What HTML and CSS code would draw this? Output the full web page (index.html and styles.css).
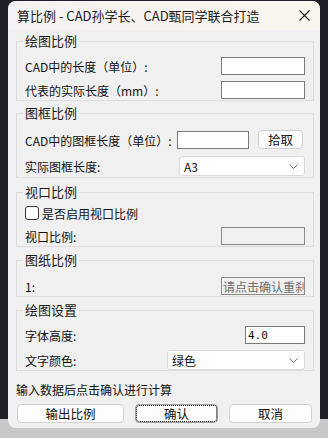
FILE: index.html
```html
<!DOCTYPE html>
<html lang="zh">
<head>
<meta charset="utf-8">
<link rel="stylesheet" href="styles.css">
</head>
<body>
<div class="window">
  <div class="titlebar">
    <span class="title">算比例 - CAD孙学长、CAD甄同学联合打造</span>
    <svg class="close" width="11" height="11" viewBox="0 0 11 11"><path d="M0.5 0.5 L10.5 10.5 M10.5 0.5 L0.5 10.5" stroke="#1a1a1a" stroke-width="1.1" fill="none"/></svg>
  </div>
  <div class="content">
    <fieldset class="group g1">
      <legend>绘图比例</legend>
      <div class="row"><span class="label">CAD中的长度（单位）:</span><span class="field w84"></span></div>
      <div class="row r-gap4"><span class="label">代表的实际长度（mm）:</span><span class="field w84"></span></div>
    </fieldset>
    <fieldset class="group g2">
      <legend>图框比例</legend>
      <div class="row"><span class="label">CAD中的图框长度（单位）:</span><span class="field w72 push"></span><span class="btn pick">拾取</span></div>
      <div class="row r-gap6"><span class="label">实际图框长度:</span><span class="select w126"><span class="sel-text">A3</span><svg class="chev" width="9" height="5" viewBox="0 0 9 5"><path d="M0.5 0.5 L4.5 4.5 L8.5 0.5" stroke="#777" fill="none"/></svg></span></div>
    </fieldset>
    <fieldset class="group g3">
      <legend>视口比例</legend>
      <div class="row"><span class="check"></span><span class="label">是否启用视口比例</span></div>
      <div class="row r-gap3"><span class="label">视口比例:</span><span class="field w84 disabled"></span></div>
    </fieldset>
    <fieldset class="group g4">
      <legend>图纸比例</legend>
      <div class="row"><span class="label">1:</span><span class="field w84 disabled readonly">请点击确认重刹</span></div>
    </fieldset>
    <fieldset class="group g5">
      <legend>绘图设置</legend>
      <div class="row"><span class="label">字体高度:</span><span class="field w60 num">4.0</span></div>
      <div class="row r-gap5"><span class="label">文字颜色:</span><span class="select w138"><span class="sel-text">绿色</span><svg class="chev" width="9" height="5" viewBox="0 0 9 5"><path d="M0.5 0.5 L4.5 4.5 L8.5 0.5" stroke="#777" fill="none"/></svg></span></div>
    </fieldset>
    <p class="hint">输入数据后点击确认进行计算</p>
    <div class="buttons">
      <span class="btn b-wide">输出比例</span>
      <span class="btn b-mid focused">确认</span>
      <span class="btn b-mid">取消</span>
    </div>
  </div>
</div>
</body>
</html>
```

FILE: styles.css
```css
html, body {
  margin: 0;
  padding: 0;
}
body {
  width: 328px;
  height: 438px;
  overflow: hidden;
  background: linear-gradient(#1f1f28 0, #1f1f28 419px, #c8c8ca 419px);
  font-family: "Noto Sans CJK SC", "Noto Sans", sans-serif;
  font-size: 12px;
  color: #111;
  padding-top: 1px;
  box-sizing: border-box;
}
.window {
  margin: 0 8px;
  width: 312px;
  height: 427px;
  background: #f0f0f0;
  border-radius: 8px;
  overflow: hidden;
  display: flex;
  flex-direction: column;
}
.titlebar {
  height: 29px;
  flex: none;
  display: flex;
  align-items: center;
  justify-content: space-between;
  padding: 0 10px 0 9px;
  background: linear-gradient(90deg, #f6f2f3, #f9f5ee);
}
.title {
  font-size: 13px;
  color: #1b1b1b;
}
.close {
  display: block;
}
.content {
  padding: 3px 6px 0 8px;
  display: flex;
  flex-direction: column;
}
.group {
  margin: 0;
  border: 1px solid #dcdcdc;
  padding: 7px 8px 0 8px;
  min-width: 0;
}
.group legend {
  padding: 0 2px;
  margin-left: -2px;
  font-size: 13px;
  line-height: 16px;
  color: #1a1a1a;
}
.g2 { margin-top: 4px; padding-top: 9px; padding-bottom: 1px; }
.g3 { margin-top: 6px; padding-top: 3px; }
.g4 { margin-top: 5px; padding-top: 8px; }
.g5 { margin-top: 5px; padding-top: 7px; }
.row {
  display: flex;
  align-items: center;
  height: 20px;
}
.r-gap3 { margin-top: 3px; }
.r-gap4 { margin-top: 4px; }
.r-gap5 { margin-top: 5px; }
.r-gap6 { margin-top: 6px; }
.label {
  white-space: nowrap;
  color: #111;
}
.field {
  margin-left: auto;
  height: 18px;
  box-sizing: border-box;
  background: #fff;
  border: 1px solid #7a7a7a;
  display: flex;
  align-items: center;
  overflow: hidden;
  white-space: nowrap;
}
.field.push { margin-left: auto; }
.w84 { width: 84px; }
.w72 { width: 72px; }
.w60 { width: 60px; }
.w126 { width: 126px; }
.w138 { width: 138px; }
.field.disabled {
  background: #f0f0f0;
  border-color: #8a8a8a;
}
.field.readonly {
  color: #6d6d6d;
  padding-left: 1px;
  font-size: 12px;
}
.field.num {
  padding-left: 2px;
  font-family: "DejaVu Sans Mono", monospace;
  font-size: 11px;
}
.btn {
  display: flex;
  align-items: center;
  justify-content: center;
  box-sizing: border-box;
  background: #fdfdfd;
  border: 1px solid #d0d0d0;
  border-radius: 4px;
  color: #111;
  font-size: 12.5px;
}
.pick {
  width: 45px;
  height: 19px;
  margin-left: 9px;
  margin-right: 2px;
  margin-top: -2px;
}
.select {
  margin-left: auto;
  height: 20px;
  box-sizing: border-box;
  background: #fff;
  border: 1px solid #dadada;
  border-radius: 3px;
  display: flex;
  align-items: center;
  justify-content: space-between;
  padding: 0 6px 0 4px;
}
.sel-text {
  font-size: 12px;
}
.chev { display: block; }
.check {
  width: 12px;
  height: 12px;
  border: 1px solid #333;
  border-radius: 3px;
  background: #fff;
  margin-right: 3px;
  flex: none;
}
.hint {
  margin: 11px 0 0 0;
  line-height: 16px;
  font-size: 12px;
  color: #111;
}
.buttons {
  margin-top: 6px;
  display: flex;
  gap: 11px;
  padding-left: 1px;
}
.buttons .btn { height: 19px; }
.b-wide { width: 107px; }
.b-mid { width: 83px; }
.focused {
  border-color: #9a9a9a;
  outline: 1px dotted #000;
  outline-offset: -2px;
}
```
